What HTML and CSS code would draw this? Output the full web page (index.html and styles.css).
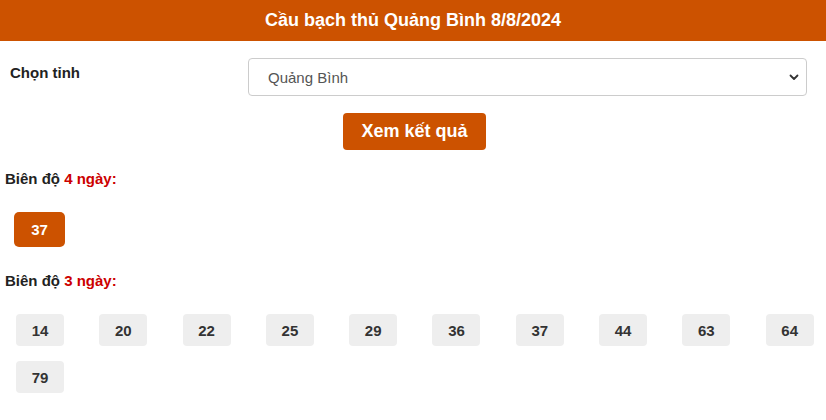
FILE: index.html
```html
<!DOCTYPE html>
<html lang="vi">
<head>
<meta charset="utf-8">
<title>Cầu bạch thủ Quảng Bình 8/8/2024</title>
<link rel="stylesheet" href="styles.css">
</head>
<body>
<h1 class="title">Cầu bạch thủ Quảng Bình 8/8/2024</h1>
<form class="filter">
  <label class="filter-label" for="province">Chọn tỉnh</label>
  <div class="select-wrap">
    <select id="province" class="select">
      <option>Quảng Bình</option>
    </select>
    <svg class="select-caret" width="10" height="7" viewBox="0 0 10 7"><path d="M1.5 1.5 5 5l3.5-3.5" fill="none" stroke="#333" stroke-width="1.8" stroke-linecap="round" stroke-linejoin="round"/></svg>
  </div>
</form>
<div class="actions"><button type="button" class="btn">Xem kết quả</button></div>

<section class="group">
  <h2 class="group-title">Biên độ <span class="hl">4 ngày:</span></h2>
  <div class="chips chips-main">
    <span class="chip chip-hot">37</span>
  </div>
</section>

<section class="group">
  <h2 class="group-title">Biên độ <span class="hl">3 ngày:</span></h2>
  <div class="chips">
    <span class="chip">14</span>
    <span class="chip">20</span>
    <span class="chip">22</span>
    <span class="chip">25</span>
    <span class="chip">29</span>
    <span class="chip">36</span>
    <span class="chip">37</span>
    <span class="chip">44</span>
    <span class="chip">63</span>
    <span class="chip">64</span>
    <span class="chip">79</span>
  </div>
</section>
</body>
</html>
```

FILE: styles.css
```css
* { box-sizing: border-box; }

body {
  margin: 0;
  font-family: "Liberation Sans", Arial, sans-serif;
  color: #333;
  background: #fff;
}

.title {
  margin: 0;
  height: 41px;
  background: #cc5200;
  color: #fff;
  font-size: 18px;
  font-weight: bold;
  display: flex;
  align-items: center;
  justify-content: center;
}

.filter {
  display: grid;
  grid-template-columns: 248px 1fr;
  align-items: start;
  margin: 17px 19px 0 0;
}

.filter-label {
  padding: 6px 0 0 10px;
  font-size: 15px;
  font-weight: bold;
  color: #222;
}

.select-wrap {
  position: relative;
}

.select {
  display: block;
  width: 100%;
  height: 38px;
  padding: 0 19px;
  border: 1px solid #ccc;
  border-radius: 4px;
  background: #fff;
  font-family: inherit;
  font-size: 15px;
  color: #555;
  appearance: none;
  -webkit-appearance: none;
}

.select-caret {
  position: absolute;
  right: 8px;
  top: 16px;
}

.actions {
  display: flex;
  justify-content: center;
  margin-top: 17px;
}

.btn {
  width: 143px;
  height: 37px;
  border: 0;
  border-radius: 4px;
  background: #cc5200;
  color: #fff;
  font-family: inherit;
  font-size: 18px;
  font-weight: bold;
  margin-left: 3px;
}

.group-title {
  margin: 0;
  padding-left: 5px;
  font-size: 15px;
  font-weight: bold;
  color: #222;
}

.group:first-of-type .group-title { margin-top: 20px; }
.group + .group .group-title { margin-top: 25px; }

.hl { color: #cc0000; }

.chips {
  display: flex;
  flex-wrap: wrap;
  column-gap: 35.3px;
  row-gap: 15px;
  padding-left: 16px;
  margin-top: 25px;
}

.chips-main {
  padding-left: 14px;
}

.chip {
  width: 48px;
  height: 32px;
  display: flex;
  align-items: center;
  justify-content: center;
  border-radius: 4px;
  background: #eee;
  color: #333;
  font-size: 15px;
  font-weight: bold;
}

.chip-hot {
  width: 51px;
  height: 35px;
  background: #cc5200;
  color: #fff;
  border-radius: 5px;
}
```
